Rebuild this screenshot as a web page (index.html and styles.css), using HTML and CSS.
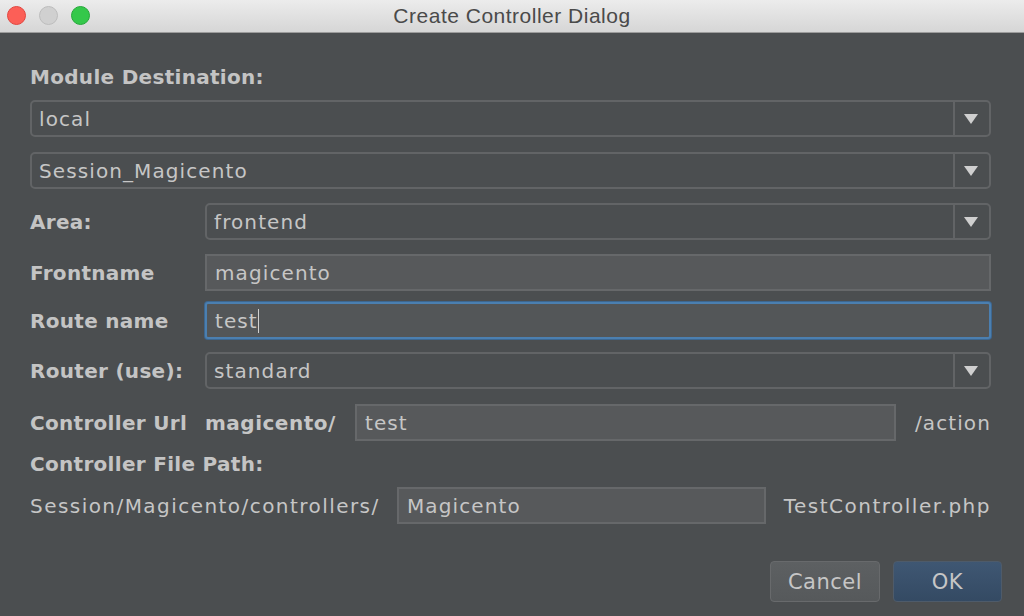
FILE: index.html
```html
<!DOCTYPE html>
<html>
<head>
<meta charset="utf-8">
<link rel="stylesheet" href="styles.css">
</head>
<body>
<div class="window">
  <div class="titlebar">
    <div class="lights">
      <span class="light red"></span>
      <span class="light gray"></span>
      <span class="light green"></span>
    </div>
    <div class="title">Create Controller Dialog</div>
  </div>
  <div class="content">
    <div class="heading">Module Destination:</div>
    <div class="combo full"><span class="val">local</span><span class="arrow"></span></div>
    <div class="combo full second"><span class="val">Session_Magicento</span><span class="arrow"></span></div>
    <div class="row r-area">
      <div class="label">Area:</div>
      <div class="combo"><span class="val">frontend</span><span class="arrow"></span></div>
    </div>
    <div class="row r-front">
      <div class="label">Frontname</div>
      <div class="field">magicento</div>
    </div>
    <div class="row r-route">
      <div class="label">Route name</div>
      <div class="field focus">test<span class="caret"></span></div>
    </div>
    <div class="row r-router">
      <div class="label">Router (use):</div>
      <div class="combo"><span class="val">standard</span><span class="arrow"></span></div>
    </div>
    <div class="row r-url">
      <div class="label">Controller Url</div>
      <div class="bold prefix">magicento/</div>
      <div class="field url">test</div>
      <div class="suffix">/action</div>
    </div>
    <div class="heading h2">Controller File Path:</div>
    <div class="row r-path">
      <div class="plain">Session/Magicento/controllers/</div>
      <div class="field path">Magicento</div>
      <div class="suffix2">TestController.php</div>
    </div>
    <div class="buttons">
      <div class="btn cancel">Cancel</div>
      <div class="btn ok">OK</div>
    </div>
  </div>
</div>
</body>
</html>
```
FILE: styles.css
```css
html, body {
  margin: 0;
  padding: 0;
  width: 1024px;
  height: 616px;
  overflow: hidden;
  background: #4b4e50;
}
.window {
  width: 1024px;
  height: 616px;
  display: flex;
  flex-direction: column;
  font-family: "DejaVu Sans", Verdana, sans-serif;
  color: #c6c6c6;
  font-size: 20px;
  letter-spacing: 1.1px;
}
.titlebar {
  height: 32px;
  border-bottom: 1px solid #9c9c9c;
  background: linear-gradient(#ececec, #d6d6d6);
  display: flex;
  align-items: center;
  justify-content: center;
  position: relative;
}
.lights {
  position: absolute;
  left: 7px;
  top: 6px;
  display: flex;
  gap: 13px;
}
.light {
  width: 19px;
  height: 19px;
  border-radius: 50%;
  box-sizing: border-box;
}
.red { background: #fc5f57; border: 1px solid #e2463f; }
.gray { background: #d0d0d0; border: 1px solid #bdbdbd; }
.green { background: #34c84a; border: 1px solid #25a83a; }
.title {
  font-family: "Liberation Sans", Arial, sans-serif;
  font-size: 21px;
  letter-spacing: 0.5px;
  color: #4a4a4a;
}
.content {
  flex: 1;
  padding: 0 33px 0 30px;
  display: flex;
  flex-direction: column;
  position: relative;
}
.heading {
  font-weight: bold;
  letter-spacing: 0.3px;
  height: 24px;
  line-height: 24px;
  margin-top: 32px;
  margin-bottom: 11px;
  color: #c4c4c4;
}
.h2 {
  margin-top: 11px;
  margin-bottom: 11px;
}
.combo {
  height: 37px;
  box-sizing: border-box;
  border: 2px solid #626466;
  border-radius: 5px;
  display: flex;
  align-items: center;
  flex: 1;
}
.combo.full { flex: none; }
.combo.second { margin-top: 15px; }
.combo .val {
  flex: 1;
  padding-left: 7px;
}
.combo .arrow {
  width: 34px;
  height: 100%;
  border-left: 2px solid #626466;
  position: relative;
}
.combo .arrow::after {
  content: "";
  position: absolute;
  left: 9px;
  top: 12px;
  border-left: 7px solid transparent;
  border-right: 7px solid transparent;
  border-top: 10px solid #cfcfcf;
}
.row {
  display: flex;
  align-items: center;
  height: 37px;
}
.r-area { margin-top: 14px; }
.r-front { margin-top: 14px; }
.r-route { margin-top: 11px; }
.r-router { margin-top: 13px; }
.r-url { margin-top: 15px; }
.r-path { margin-top: 0; }
.label {
  width: 175px;
  font-weight: bold;
  letter-spacing: 0.3px;
  color: #c4c4c4;
}
.field {
  flex: 1;
  height: 37px;
  box-sizing: border-box;
  background: #57595b;
  border: 2px solid #66686a;
  display: flex;
  align-items: center;
  padding-left: 8px;
}
.field.focus {
  border: 2px solid #4b7fb0;
  border-radius: 3px;
  box-shadow: 0 0 0 1px #3d6790;
  background: #535658;
}
.caret {
  width: 1px;
  height: 24px;
  background: #d0d0d0;
  margin-left: 0;
}
.bold {
  font-weight: bold;
  letter-spacing: 0.5px;
}
.prefix { width: 150px; }
.field.url { flex: none; width: 541px; }
.suffix { flex: 1; text-align: right; }
.plain { width: 367px; letter-spacing: 1.45px; }
.field.path { flex: none; width: 369px; }
.suffix2 { flex: 1; text-align: right; letter-spacing: 1.5px; }
.buttons {
  display: flex;
  justify-content: flex-end;
  gap: 13px;
  margin-top: 37px;
  margin-right: -11px;
}
.btn {
  height: 41px;
  box-sizing: border-box;
  border-radius: 4px;
  font-size: 21px;
  letter-spacing: 0.5px;
  display: flex;
  align-items: center;
  justify-content: center;
}
.cancel {
  width: 110px;
  background: linear-gradient(#5d6062, #56595b);
  border: 1px solid #686a6c;
}
.ok {
  width: 109px;
  background: linear-gradient(#3f5773, #344a63);
  border: 1px solid #4e5b6a;
}
```
